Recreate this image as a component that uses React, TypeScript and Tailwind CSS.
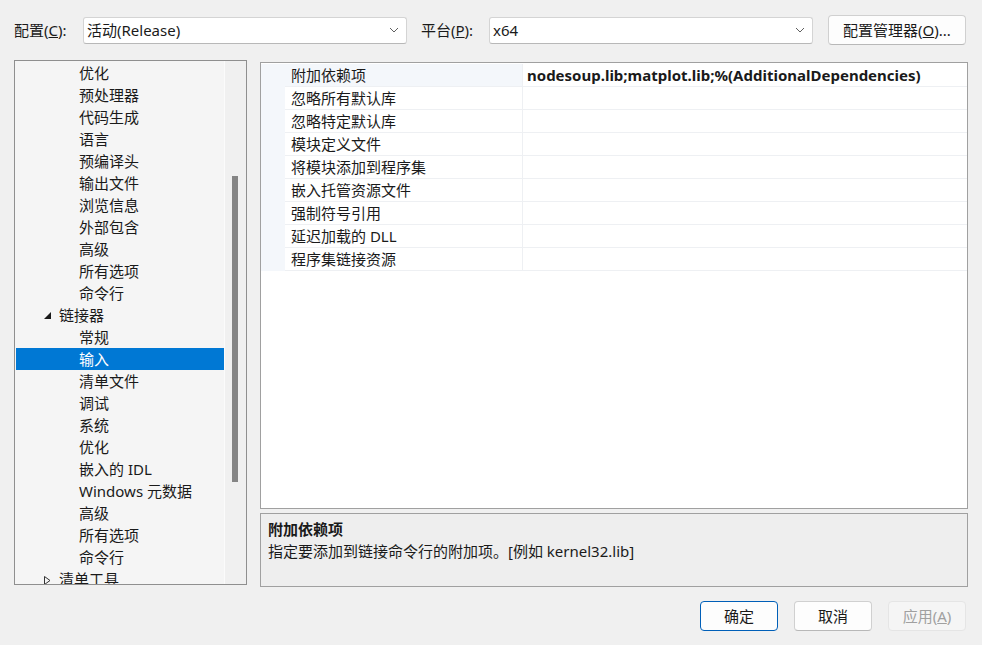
import React from 'react';

const treeItems: { label: string; kind?: 'open' | 'closed'; selected?: boolean }[] = [
  { label: '优化' },
  { label: '预处理器' },
  { label: '代码生成' },
  { label: '语言' },
  { label: '预编译头' },
  { label: '输出文件' },
  { label: '浏览信息' },
  { label: '外部包含' },
  { label: '高级' },
  { label: '所有选项' },
  { label: '命令行' },
  { label: '链接器', kind: 'open' },
  { label: '常规' },
  { label: '输入', selected: true },
  { label: '清单文件' },
  { label: '调试' },
  { label: '系统' },
  { label: '优化' },
  { label: '嵌入的 IDL' },
  { label: 'Windows 元数据' },
  { label: '高级' },
  { label: '所有选项' },
  { label: '命令行' },
  { label: '清单工具', kind: 'closed' },
];

const props = [
  '附加依赖项',
  '忽略所有默认库',
  '忽略特定默认库',
  '模块定义文件',
  '将模块添加到程序集',
  '嵌入托管资源文件',
  '强制符号引用',
  '延迟加载的 DLL',
  '程序集链接资源',
];

function Chevron() {
  return (
    <svg width="10" height="6" viewBox="0 0 10 6" className="shrink-0">
      <path d="M1 1 L5 5 L9 1" fill="none" stroke="#606060" strokeWidth="1" />
    </svg>
  );
}

function Combo({ value }: { value: string }) {
  return (
    <div className="flex items-center w-[324px] h-[27px] bg-white border border-[#d4d4d4] border-b-[#b8b8b8] rounded-[3px] pl-[3px] pr-[7px]">
      <span className="flex-1 leading-[20px]">{value}</span>
      <Chevron />
    </div>
  );
}

function TreeRow({ item }: { item: (typeof treeItems)[number] }) {
  const parent = item.kind !== undefined;
  return (
    <div
      className={`flex items-center h-[22px] shrink-0 ${item.selected ? 'bg-[#0078d4] text-white' : ''} ${
        parent ? 'pl-[28px]' : 'pl-[63px]'
      }`}
    >
      {item.kind === 'open' && (
        <svg width="7" height="7" viewBox="0 0 7 7" className="mr-[8px] mt-[1px]">
          <polygon points="7,0 7,7 0,7" fill="#1a1a1a" />
        </svg>
      )}
      {item.kind === 'closed' && (
        <svg width="7" height="9" viewBox="0 0 7 9" className="mr-[8px] mt-[3px]">
          <polygon points="0.5,0.5 6,4.5 0.5,8.5" fill="none" stroke="#333" strokeWidth="1" />
        </svg>
      )}
      <span className="leading-[20px] whitespace-nowrap">{item.label}</span>
    </div>
  );
}

export default function App() {
  return (
    <div className="w-[982px] h-[645px] bg-[#f0f0f0] text-[15px] text-[#1a1a1a] font-['Noto_Sans','Noto_Sans_CJK_SC',sans-serif] overflow-hidden">
      {/* top bar */}
      <div className="flex items-center h-[30px] mt-[15px] pl-[14px]">
        <span className="w-[69px] leading-[20px]">
          配置(<span className="underline">C</span>):
        </span>
        <Combo value="活动(Release)" />
        <span className="w-[68px] ml-[14px] leading-[20px]">
          平台(<span className="underline">P</span>):
        </span>
        <Combo value="x64" />
        <button className="ml-[15px] w-[138px] h-[30px] bg-[#fdfdfd] border border-[#d0d0d0] border-b-[#b8b8b8] rounded-[4px] leading-[20px]">
          配置管理器(<span className="underline">O</span>)...
        </button>
      </div>

      {/* main */}
      <div className="flex mt-[15px] pl-[14px]">
        <div className="flex w-[233px] h-[525px] border border-[#8f8f8f] overflow-hidden">
          <div className="flex flex-col w-[209px] bg-[#f5f5f5] pt-[1px] pl-[1px] overflow-hidden">
            {treeItems.map((it, i) => (
              <TreeRow key={i} item={it} />
            ))}
          </div>
          <div className="w-[1px] bg-[#fbfbfb]" />
          <div className="flex-1 bg-[#f0f0f0] pt-[115px] pl-[7px]">
            <div className="w-[6px] h-[306px] bg-[#858585]" />
          </div>
        </div>

        <div className="flex flex-col ml-[13px] mt-[2px] w-[708px]">
          <div className="h-[447px] bg-white border border-[#a0a0a0] pt-[1px]">
            {props.map((p, i) => (
              <div key={i} className="flex h-[23px]">
                <div className="w-[24px] bg-[#f4f7fb]" />
                <div
                  className={`w-[238px] pl-[6px] flex items-center border-b border-r border-[#eef0f3] ${
                    i === 0 ? 'bg-[#f4f7fb]' : ''
                  }`}
                >
                  <span className="leading-[20px] whitespace-nowrap">{p}</span>
                </div>
                <div className="flex-1 pl-[4px] flex items-center border-b border-[#eef0f3]">
                  {i === 0 && (
                    <span className="font-bold leading-[20px] whitespace-nowrap">
                      nodesoup.lib;matplot.lib;%(AdditionalDependencies)
                    </span>
                  )}
                </div>
              </div>
            ))}
          </div>
          <div className="mt-[4px] h-[74px] border border-[#a0a0a0] bg-[#eeeeee] pl-[7px] pt-[4px]">
            <div className="font-bold leading-[22px]">附加依赖项</div>
            <div className="leading-[22px]">指定要添加到链接命令行的附加项。[例如 kernel32.lib]</div>
          </div>
        </div>
      </div>

      {/* buttons */}
      <div className="flex justify-end gap-[16px] mt-[14px] pr-[16px]">
        <button className="w-[78px] h-[30px] bg-[#fdfdfd] border border-[#005fb8] rounded-[4px] leading-[20px]">
          确定
        </button>
        <button className="w-[78px] h-[30px] bg-[#fdfdfd] border border-[#d0d0d0] border-b-[#b8b8b8] rounded-[4px] leading-[20px]">
          取消
        </button>
        <button className="w-[78px] h-[30px] bg-[#f5f5f5] border border-[#e5e5e5] rounded-[4px] leading-[20px] text-[#a0a0a0]">
          应用(<span className="underline">A</span>)
        </button>
      </div>
    </div>
  );
}
